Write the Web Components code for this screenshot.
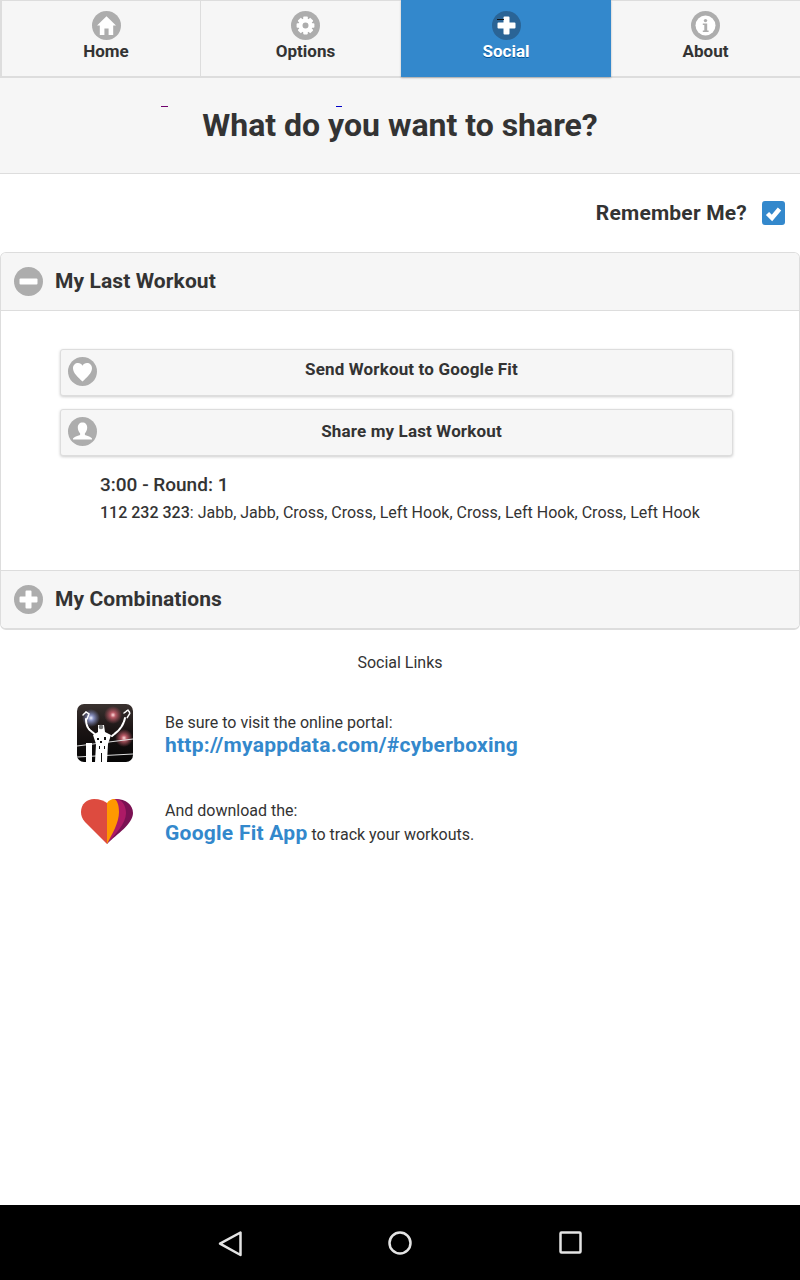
<!DOCTYPE html>
<html>
<head>
<meta charset="utf-8">
<style>
  html, body { margin: 0; padding: 0; }
  body {
    width: 800px;
    height: 1280px;
    overflow: hidden;
    display: flex;
    flex-direction: column;
    background: #fff;
    color: #333;
    font-family: Roboto, "Liberation Sans", sans-serif;
  }
  .grow { flex: 1; }
  .glitch { position: absolute; height: 1px; }
</style>
</head>
<body>
<script>
  // glyphs drawn white on the grey discs, 29x29 box
  const GEAR_TEETH = [0, 45, 90, 135, 180, 225, 270, 315]
    .map((a) => `<rect x="12.2" y="5.6" width="4.6" height="4" rx=".8" fill="#fff" transform="rotate(${a} 14.5 14.5)"/>`)
    .join("");
  const GLYPHS = {
    home: `<path fill="#fff" d="M14.5 5.2 24 14.4h-2.8V24h-4.6v-6.6h-4.2V24H7.8v-9.6H5z"/>`,
    gear: `${GEAR_TEETH}<circle cx="14.5" cy="14.5" r="5" fill="none" stroke="#fff" stroke-width="4"/>`,
    plus: `<path fill="#fff" d="M11.5 6.5a1 1 0 0 1 1-1h4a1 1 0 0 1 1 1v5h5a1 1 0 0 1 1 1v4a1 1 0 0 1-1 1h-5v5a1 1 0 0 1-1 1h-4a1 1 0 0 1-1-1v-5h-5a1 1 0 0 1-1-1v-4a1 1 0 0 1 1-1h5z"/>`,
    minus: `<rect x="5.5" y="11.5" width="18" height="6" rx="1" fill="#fff"/>`,
    info: `<circle cx="14.5" cy="14.5" r="10" fill="#fff"/><circle cx="14.5" cy="9.6" r="1.7" fill="#adadad"/><path fill="#adadad" d="M11.8 12.6h4.4v7h1.4v1.3h-5.8v-1.3h1.5v-5.7h-1.5z"/>`,
    heart: `<path fill="#fff" d="M14.5 24.5C10 20 5 16 5 11.2 5 8 7.3 6 10 6c2 0 3.6 1 4.5 2.8C15.4 7 17 6 19 6c2.7 0 5 2 5 5.2 0 4.8-5 8.8-9.5 13.3z"/>`,
    user: `<path fill="#fff" d="M14.5 5.5c2.9 0 4.7 2.1 4.7 5 0 2.5-1 4.5-2.3 5.7v1.7c2.8.9 6.3 1.8 7.1 3.6v1h-19v-1c.8-1.8 4.3-2.7 7.1-3.6v-1.7c-1.3-1.2-2.3-3.2-2.3-5.7 0-2.9 1.8-5 4.7-5z"/>`
  };

  class RoundIcon extends HTMLElement {
    connectedCallback() {
      const name = this.getAttribute("name");
      const disc = this.getAttribute("disc") || "#adadad";
      this.attachShadow({ mode: "open" }).innerHTML = `
        <style>
          :host { display: block; width: 29px; height: 29px; flex: none; }
          svg { display: block; }
        </style>
        <svg width="29" height="29" viewBox="0 0 29 29"><circle cx="14.5" cy="14.5" r="14.5" fill="${disc}"/>${GLYPHS[name]}</svg>`;
    }
  }
  customElements.define("round-icon", RoundIcon);

  class NavBar extends HTMLElement {
    constructor() {
      super();
      this.attachShadow({ mode: "open" }).innerHTML = `
        <style>
          :host {
            display: grid;
            grid-template-columns: 200px 200px 211px 189px;
            height: 78px;
            box-sizing: border-box;
            border-top: 1px solid #ddd;
            border-bottom: 2px solid #ddd;
            background: #f6f6f6;
          }
        </style>
        <slot></slot>`;
    }
  }
  customElements.define("nav-bar", NavBar);

  class NavTab extends HTMLElement {
    connectedCallback() {
      const active = this.hasAttribute("active");
      const disc = active ? "#2a6496" : "#adadad";
      this.attachShadow({ mode: "open" }).innerHTML = `
        <style>
          :host {
            display: flex;
            flex-direction: column;
            align-items: center;
            box-sizing: border-box;
            padding-top: 10px;
            padding-left: var(--shift, 0);
            position: relative;
            font-size: 17px;
            font-weight: 700;
            line-height: 19px;
            color: #333;
            text-shadow: 0 1px 0 #f3f3f3;
          }
          :host([active]) {
            margin: -1px 0 -1px 1px;
            padding-top: 11px;
            background: #38c;
            color: #fff;
            text-shadow: 0 1px 0 #059;
            box-shadow: 0 1px 2px rgba(0,0,0,.25);
            z-index: 1;
          }
          :host([divided]) { border-left: 1px solid #ddd; }
          :host([edge]) { border-left: 2px solid #ddd; }
          span { margin-top: 2px; }
        </style>
        <round-icon name="${this.getAttribute("icon")}" disc="${disc}"></round-icon>
        <span><slot></slot></span>`;
    }
  }
  customElements.define("nav-tab", NavTab);

  class PageTitle extends HTMLElement {
    constructor() {
      super();
      this.attachShadow({ mode: "open" }).innerHTML = `
        <style>
          :host {
            display: block;
            box-sizing: border-box;
            height: 96px;
            padding-top: 26px;
            background: #f6f6f6;
            border-bottom: 1px solid #ddd;
            text-align: center;
            font-size: 32px;
            line-height: 42px;
            font-weight: 700;
            color: #333;
            text-shadow: 0 1px 0 #f3f3f3;
          }
        </style>
        <slot></slot>`;
    }
  }
  customElements.define("page-title", PageTitle);

  class RememberRow extends HTMLElement {
    constructor() {
      super();
      this.attachShadow({ mode: "open" }).innerHTML = `
        <style>
          :host {
            display: flex;
            justify-content: flex-end;
            align-items: center;
            gap: 15px;
            height: 78px;
            padding: 0 15px 1px 0;
            box-sizing: border-box;
            font-size: 21px;
            font-weight: 700;
            letter-spacing: .2px;
            color: #333;
          }
          .box {
            width: 23px;
            height: 24px;
            border-radius: 3px;
            background: #38c;
          }
          svg { display: block; }
        </style>
        <span><slot></slot></span>
        <div class="box">
          <svg width="23" height="24" viewBox="0 0 23 24"><path d="M5.5 12.500 10 17l7.500-9" fill="none" stroke="#fff" stroke-width="4.500"/></svg>
        </div>`;
    }
  }
  customElements.define("remember-row", RememberRow);

  class CollapsibleSet extends HTMLElement {
    constructor() {
      super();
      this.attachShadow({ mode: "open" }).innerHTML = `
        <style>
          :host {
            display: block;
            box-sizing: border-box;
            border: 1px solid #ddd;
            border-bottom-width: 2px;
            border-radius: 6px;
            overflow: hidden;
          }
        </style>
        <slot></slot>`;
    }
  }
  customElements.define("collapsible-set", CollapsibleSet);

  class CollapsibleHead extends HTMLElement {
    connectedCallback() {
      this.attachShadow({ mode: "open" }).innerHTML = `
        <style>
          :host {
            display: flex;
            align-items: center;
            gap: 12px;
            box-sizing: border-box;
            height: 57px;
            padding-left: 13px;
            background: #f6f6f6;
            font-size: 21px;
            font-weight: 700;
            letter-spacing: .1px;
            color: #333;
            text-shadow: 0 1px 0 #f3f3f3;
          }
          span { margin-top: -2px; }
        </style>
        <round-icon name="${this.getAttribute("icon")}"></round-icon>
        <span><slot></slot></span>`;
    }
  }
  customElements.define("collapsible-head", CollapsibleHead);

  class CollapsibleBody extends HTMLElement {
    constructor() {
      super();
      this.attachShadow({ mode: "open" }).innerHTML = `
        <style>
          :host {
            display: block;
            box-sizing: border-box;
            height: 261px;
            padding: 38px 66px 0 59px;
            border-top: 1px solid #ddd;
            border-bottom: 1px solid #ddd;
          }
        </style>
        <slot></slot>`;
    }
  }
  customElements.define("collapsible-body", CollapsibleBody);

  class IconButton extends HTMLElement {
    connectedCallback() {
      this.attachShadow({ mode: "open" }).innerHTML = `
        <style>
          :host {
            display: flex;
            align-items: center;
            justify-content: center;
            position: relative;
            box-sizing: border-box;
            height: 47px;
            margin-bottom: 13px;
            padding-left: 30px;
            border: 1px solid #ddd;
            border-radius: 3px;
            background: #f6f6f6;
            box-shadow: 0 1px 3px rgba(0,0,0,.2);
            font-size: 17px;
            font-weight: 700;
            letter-spacing: .15px;
            color: #333;
            text-shadow: 0 1px 0 #f3f3f3;
          }
          round-icon { position: absolute; left: 7px; top: 7px; }
          span { margin-top: var(--lift, 0); }
        </style>
        <round-icon name="${this.getAttribute("icon")}"></round-icon>
        <span><slot></slot></span>`;
    }
  }
  customElements.define("icon-button", IconButton);

  class WorkoutInfo extends HTMLElement {
    constructor() {
      super();
      this.attachShadow({ mode: "open" }).innerHTML = `
        <style>
          :host {
            display: block;
            padding: 0 0 0 40px;
            color: #333;
            font-size: 16px;
            line-height: 27px;
            white-space: nowrap;
          }
          .round {
            padding-top: 1px;
            margin-bottom: -1px;
            font-size: 19px;
            font-weight: 500;
            line-height: 30px;
            text-shadow: 0 1px 0 #f3f3f3;
          }
          ::slotted(b) { font-weight: 500; }
        </style>
        <div class="round"><slot name="round"></slot></div>
        <div><slot></slot></div>`;
    }
  }
  customElements.define("workout-info", WorkoutInfo);

  class SectionLabel extends HTMLElement {
    constructor() {
      super();
      this.attachShadow({ mode: "open" }).innerHTML = `
        <style>
          :host {
            display: block;
            padding-top: 23px;
            height: 59px;
            box-sizing: border-box;
            text-align: center;
            font-size: 16px;
            line-height: 19px;
            color: #333;
          }
        </style>
        <slot></slot>`;
    }
  }
  customElements.define("section-label", SectionLabel);

  class SocialRow extends HTMLElement {
    constructor() {
      super();
      this.attachShadow({ mode: "open" }).innerHTML = `
        <style>
          :host {
            display: flex;
            align-items: center;
            gap: 32px;
            height: 88px;
            padding-left: 77px;
            box-sizing: border-box;
            font-size: 16px;
            line-height: 23px;
            color: #333;
          }
          .pic { width: 56px; height: 58px; flex: none; }
          .text { margin-top: 2px; }
          ::slotted(a) {
            font-size: 21px;
            font-weight: 700;
            letter-spacing: .25px;
            color: #38c;
            text-decoration: none;
          }
        </style>
        <div class="pic"><slot name="pic"></slot></div>
        <div class="text"><slot></slot></div>`;
    }
  }
  customElements.define("social-row", SocialRow);

  class SystemBar extends HTMLElement {
    constructor() {
      super();
      this.attachShadow({ mode: "open" }).innerHTML = `
        <style>
          :host { display: block; height: 75px; background: #000; }
          svg { display: block; }
        </style>
        <svg width="800" height="75" viewBox="0 0 800 75">
          <g fill="none" stroke="#e4e4e4" stroke-width="2.500" stroke-linejoin="round">
            <path d="M240.500 27.500v22.500l-20.500-11.300z"/>
            <circle cx="400" cy="38" r="10.500"/>
            <rect x="560.500" y="27.500" width="20" height="20" rx="1"/>
          </g>
        </svg>`;
    }
  }
  customElements.define("system-bar", SystemBar);
</script>

<nav-bar>
  <nav-tab icon="home" edge style="--shift:10px">Home</nav-tab>
  <nav-tab icon="gear" divided style="--shift:10px">Options</nav-tab>
  <nav-tab icon="plus" active>Social</nav-tab>
  <nav-tab icon="info">About</nav-tab>
</nav-bar>

<page-title>What do you want to share?</page-title>
<remember-row>Remember Me?</remember-row>

<collapsible-set>
  <collapsible-head icon="minus">My Last Workout</collapsible-head>
  <collapsible-body>
    <icon-button icon="heart" style="--lift:-7px">Send Workout to Google Fit</icon-button>
    <icon-button icon="user" style="--lift:-3px">Share my Last Workout</icon-button>
    <workout-info>
      <span slot="round">3:00 - Round: 1</span>
      <b>112 232 323</b>: Jabb, Jabb, Cross, Cross, Left Hook, Cross, Left Hook, Cross, Left Hook
    </workout-info>
  </collapsible-body>
  <collapsible-head icon="plus">My Combinations</collapsible-head>
</collapsible-set>

<section-label>Social Links</section-label>

<social-row>
  <svg slot="pic" width="56" height="58" viewBox="0 0 56 58">
    <defs>
      <clipPath id="tile"><rect width="56" height="58" rx="7"/></clipPath>
      <linearGradient id="sky" x1="0" y1="0" x2="0" y2="1"><stop offset="0" stop-color="#3a3230"/><stop offset=".45" stop-color="#1a1414"/><stop offset="1" stop-color="#050505"/></linearGradient>
      <radialGradient id="l1"><stop offset="0" stop-color="#eef1ff"/><stop offset=".3" stop-color="#8890c0"/><stop offset="1" stop-color="#6f78a8" stop-opacity="0"/></radialGradient>
      <radialGradient id="l2"><stop offset="0" stop-color="#ffdcdc"/><stop offset=".3" stop-color="#b85a66"/><stop offset="1" stop-color="#a04a55" stop-opacity="0"/></radialGradient>
    </defs>
    <g clip-path="url(#tile)">
      <rect width="56" height="58" fill="url(#sky)"/>
      <circle cx="14" cy="14" r="9" fill="url(#l1)"/>
      <circle cx="36" cy="11" r="9" fill="url(#l2)"/>
      <circle cx="47" cy="34" r="9" fill="url(#l2)"/>
      <path d="M0 42 56 35M0 53 56 50" stroke="#ddd" stroke-width="1.200" fill="none"/>
      <g fill="none" stroke="#fff" stroke-linecap="round">
        <path d="M6 11l3-3 3 2-2 5M47 9l4-3 2 3-3 5" stroke-width="1.500" stroke-dasharray="2 1"/>
        <path d="M9 15c0 6 2 10 5 12l6 5M48 14c-1 5-4 10-7 13l-6 5" stroke-width="2" stroke-dasharray="4 1"/>
      </g>
      <path fill="#fff" d="M21 21h6l1 7 6 3-3 9-1 18H18l1-18-3-9 5-3z"/>
      <path fill="#111" d="M20 34h2v2h-2zM27 33h2v3h-2zM23 37h2v2h-2zM22 42h1v3h-1zM27 42h1v3h-1zM24 49h1v9h-1z"/>
      <circle cx="24" cy="23" r="2.300" fill="#777"/>
      <rect x="9" y="39" width="6" height="19" fill="#fff"/>
    </g>
  </svg>
  Be sure to visit the online portal:<br>
  <a>http://myappdata.com/#cyberboxing</a>
</social-row>

<social-row>
  <svg slot="pic" width="56" height="58" viewBox="0 0 56 58">
    <path fill="#7b1153" d="M36 7C48 6 56 12 56 21 56 32 40 42 30 52z"/>
    <path fill="#ad1a66" d="M36 7C44 6 49 12 49 21 49 32 38 42 30 52z"/>
    <path fill="#ff9800" d="M30 11C32 8 35 7 36.500 7 40 7 42 13 42 20 42 31 35 42 30 52z"/>
    <path fill="#dd4b3f" d="M30 52 8 30C5 27 4 23 4 20 4 12 10 7 17 7 23 7 27 9 30 11z"/>
  </svg>
  And download the:<br>
  <a>Google Fit App</a> to track your workouts.
</social-row>

<div class="grow"></div>
<system-bar></system-bar>

<div class="glitch" style="left:161px;top:106px;width:7px;background:#70006c"></div>
<div class="glitch" style="left:336px;top:106px;width:6px;background:#0000c8"></div>
<div class="glitch" style="left:497px;top:19px;width:7px;background:#111;z-index:2"></div>
</body>
</html>
